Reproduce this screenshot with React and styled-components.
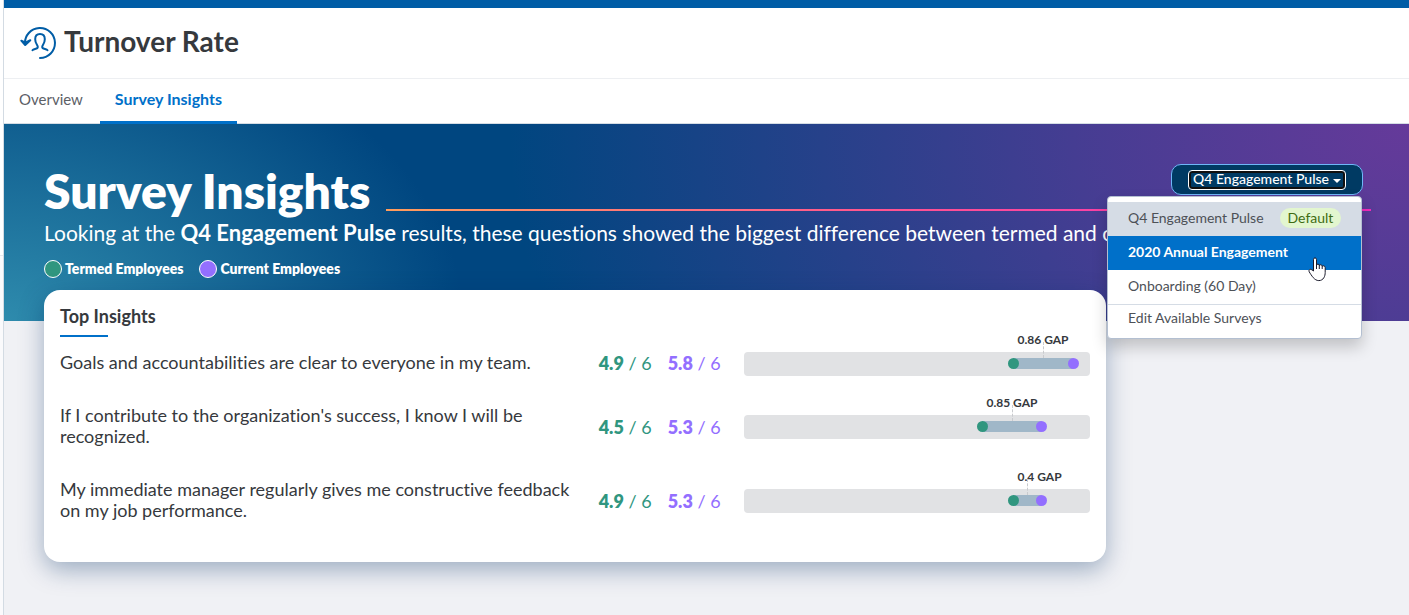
import React, { useState } from "react";

import styled, { createGlobalStyle } from "styled-components";

const insights = [
  {
    question: "Goals and accountabilities are clear to everyone in my team.",
    termed: 4.9,
    current: 5.76,
    gap: "0.86",
  },
  {
    question:
      "If I contribute to the organization's success, I know I will be recognized.",
    termed: 4.451,
    current: 5.301,
    gap: "0.85",
  },
  {
    question:
      "My immediate manager regularly gives me constructive feedback on my job performance.",
    termed: 4.9,
    current: 5.3,
    gap: "0.4",
  },
];

const surveys = [
  { name: "Q4 Engagement Pulse", selected: true },
  { name: "2020 Annual Engagement", active: true },
  { name: "Onboarding (60 Day)" },
];

// Scores run from 1 to 6
const toPercent = (score) => ((score - 1) / 5) * 100;

function TurnoverIcon() {
  return (
    <svg width="36" height="36" viewBox="0 0 36 36" fill="none" aria-hidden="true">
      <g
        stroke="#005da6"
        strokeWidth="2"
        strokeLinecap="round"
        strokeLinejoin="round"
      >
        <path d="M5 19A15 15 0 1 1 20 33" />
        <path d="M1.3 15.7L5.2 20L10.3 15.2L5.4 17.6Z" fill="#005da6" />
        <path d="M12.5 25.2C13.6 23.6 17.8 24.4 17.8 21.9C17.8 20 15.2 19 15.2 14.2C15.2 11 17 9 20 9C23 9 24.8 11 24.8 14.2C24.8 19 22.2 20 22.2 21.9C22.2 24.4 26.4 23.6 27.5 25.2" />
      </g>
    </svg>
  );
}

function Pointer() {
  return (
    <PointerIcon viewBox="0 0 18 25" aria-hidden="true">
      <path
        d="M5.5 14V2.3C5.5 .4 8.5 .4 8.5 2.3V8C8.8 6.7 11.3 6.9 11.3 8.4C11.7 7.3 14.2 7.6 14.2 9.2C14.8 8.3 17.2 8.8 17.2 10.6V15.5C17.2 19 15.6 23.6 10.8 23.6C6.4 23.6 3.6 18.6 1.2 14.8C.2 12.9 2.4 11.6 3.8 12.8Z"
        fill="#fff"
        stroke="#1a1a2b"
        strokeLinejoin="round"
      />
      <path d="M8.5 7V12M11.3 8V12M14.2 9V12" stroke="#1a1a2b" />
    </PointerIcon>
  );
}

function SurveyPicker() {
  const [open, setOpen] = useState(true);

  return (
    <Picker>
      <PickerButton
        type="button"
        aria-haspopup="menu"
        aria-expanded={open}
        onClick={() => setOpen(!open)}
      >
        Q4 Engagement Pulse
        <Caret />
      </PickerButton>
      {open && (
        <Menu role="menu">
          {surveys.map((survey) => (
            <MenuItem
              key={survey.name}
              type="button"
              role="menuitem"
              $selected={survey.selected}
              $active={survey.active}
            >
              {survey.name}
              {survey.selected && <Badge>Default</Badge>}
              {survey.active && <Pointer />}
            </MenuItem>
          ))}
          <EditItem type="button" role="menuitem">
            Edit Available Surveys
          </EditItem>
        </Menu>
      )}
    </Picker>
  );
}

function GapChart({ termed, current, gap }) {
  const start = toPercent(termed);
  const end = toPercent(current);

  return (
    <Track>
      <Range style={{ left: `${start}%`, width: `${end - start}%` }}>
        <GapLabel>{gap} GAP</GapLabel>
        <GapLine />
        <Dot $color="#30967f" $at="0%" />
        <Dot $color="#936fff" $at="100%" />
      </Range>
    </Track>
  );
}

function App() {
  return (
    <Shell>
      <GlobalStyle />
      <Rail />
      <Page>
        <Header>
          <TurnoverIcon />
          <PageTitle>Turnover Rate</PageTitle>
        </Header>
        <Tabs>
          <Tab href="#overview">Overview</Tab>
          <Tab href="#survey-insights" $active aria-current="page">
            Survey Insights
          </Tab>
        </Tabs>
        <Hero>
          <HeroTop>
            <HeroTitle>Survey Insights</HeroTitle>
            <HeroSide>
              <SurveyPicker />
              <Rule />
            </HeroSide>
          </HeroTop>
          <Intro>
            Looking at the <strong>Q4 Engagement Pulse</strong> results, these
            questions showed the biggest difference between termed and current
            employees.
          </Intro>
          <Legend>
            <LegendItem $color="#30967f">Termed Employees</LegendItem>
            <LegendItem $color="#936fff">Current Employees</LegendItem>
          </Legend>
        </Hero>
        <Card>
          <CardTitle>Top Insights</CardTitle>
          <InsightTable>
            <colgroup>
              <col />
              <ScoreCol />
              <ScoreCol $wide />
              <ChartCol />
            </colgroup>
            <tbody>
              {insights.map((item) => (
                <tr key={item.question}>
                  <Question scope="row">{item.question}</Question>
                  <Score $color="#30967f">
                    <b>{item.termed.toFixed(1)}</b> / 6
                  </Score>
                  <Score $color="#936fff">
                    <b>{item.current.toFixed(1)}</b> / 6
                  </Score>
                  <Cell>
                    <GapChart {...item} />
                  </Cell>
                </tr>
              ))}
            </tbody>
          </InsightTable>
        </Card>
      </Page>
    </Shell>
  );
}

export default App;

const GlobalStyle = createGlobalStyle`
  * {
    box-sizing: border-box;
  }

  body {
    margin: 0;
    background: #f0f1f5;
    color: #36393d;
    font-family: Lato, "Open Sans", sans-serif;
    font-variant-ligatures: none;
  }

  button {
    font-family: inherit;
    font-variant-ligatures: none;
  }
`;

const Shell = styled.div`
  display: flex;
  min-height: 100vh;
`;

const Rail = styled.div`
  width: 4px;
  flex: none;
  background: linear-gradient(#fff 255px, #e6e9ee 255px, #e6e9ee 256px, #fafafc 256px);
  border-right: 1px solid #d3dbe3;
`;

const Page = styled.div`
  flex: 1;
  min-width: 0;
  border-top: 8px solid #005da6;
`;

const Header = styled.header`
  display: flex;
  align-items: center;
  gap: 8px;
  height: 71px;
  padding: 0 16px;
  background: #fff;
  border-bottom: 1px solid #edeff2;
`;

const PageTitle = styled.h1`
  margin: 0;
  padding-bottom: 4px;
  font-size: 28px;
  font-weight: 700;
  line-height: 36px;
`;

const Tabs = styled.nav`
  display: flex;
  gap: 2px;
  height: 45px;
  background: #fff;
  box-shadow: inset 0 -1px #d5dde5;
`;

const Tab = styled.a`
  padding: 9px 15px 0;
  font-size: ${(props) => (props.$active ? "16px" : "15px")};
  font-weight: ${(props) => (props.$active ? 700 : 400)};
  line-height: 22px;
  color: ${(props) => (props.$active ? "#0070c9" : "#5c6066")};
  border-bottom: 3px solid ${(props) => (props.$active ? "#0070c9" : "transparent")};
  text-decoration: none;
`;

const Hero = styled.section`
  padding: 39px 38px 42px 40px;
  color: #fff;
  background:
    radial-gradient(ellipse 460px 310px at 0 100%, #2e8bad, rgba(0, 70, 128, 0) 100%),
    radial-gradient(ellipse 900px 700px at 100% 0, #653a9a, rgba(84, 59, 150, 0.85) 35%, rgba(0, 70, 128, 0) 100%),
    #004680;
`;

const HeroTop = styled.div`
  display: flex;
  gap: 16px;
`;

const HeroTitle = styled.h2`
  margin: 0;
  font-size: 48px;
  font-weight: 800;
  line-height: 56px;
`;

const HeroSide = styled.div`
  display: flex;
  flex: 1;
  flex-direction: column;
  justify-content: space-between;
  padding: 1px 0 8px;
`;

const Rule = styled.div`
  height: 2px;
  background: linear-gradient(to right, #ff9d5c, #ff5490 50%, #f32bbd);
`;

const Picker = styled.div`
  position: relative;
  display: flex;
  align-items: center;
  align-self: flex-end;
  height: 31px;
  margin-right: 8px;
  padding: 0 17px;
  background: #003a63;
  border: 1px solid #6fb6f8;
  border-radius: 10px;
`;

const PickerButton = styled.button`
  display: flex;
  align-items: center;
  gap: 4px;
  height: 18px;
  padding: 0 2px 2px;
  font-size: 14px;
  font-weight: 500;
  line-height: 14px;
  color: #fff;
  background: none;
  border: 2px solid #101010;
  border-radius: 3px;
  outline: 1px solid #fff;
  cursor: pointer;
`;

const Caret = styled.span`
  margin-top: 4px;
  border: 4px solid transparent;
  border-top-color: #fff;
  border-bottom: 0;
`;

const Menu = styled.div`
  position: absolute;
  z-index: 2;
  top: 31px;
  right: 0;
  width: 255px;
  padding: 5px 0;
  background: #fff;
  border: 1px solid #b3bfd1;
  border-radius: 4px;
  box-shadow: 0 8px 16px rgba(0, 0, 0, 0.2);
`;

const MenuItem = styled.button`
  position: relative;
  display: flex;
  align-items: center;
  gap: 16px;
  width: 100%;
  height: 34px;
  padding: 0 20px 2px;
  font-size: 14px;
  font-weight: ${(props) => (props.$active ? 700 : 400)};
  line-height: 20px;
  white-space: nowrap;
  color: ${(props) => (props.$active ? "#fff" : "#4d5157")};
  background: ${(props) =>
    props.$active ? "#0070c9" : props.$selected ? "#d5dce5" : "#fff"};
  border: 0;
  cursor: pointer;
`;

const EditItem = styled(MenuItem)`
  height: 29px;
  border-top: 1px solid #d5dce5;
`;

const Badge = styled.span`
  padding: 0 8px;
  color: #3f6b12;
  background: #e3f6cf;
  border-radius: 10px;
`;

const PointerIcon = styled.svg`
  position: absolute;
  top: 21px;
  right: 35px;
  width: 18px;
  height: 25px;
  z-index: 1;
  fill: none;
`;

const Intro = styled.p`
  margin: 0;
  font-size: 21px;
  line-height: 28px;

  strong {
    font-size: 22px;
    font-weight: 700;
    line-height: 26px;
  }
`;

const Legend = styled.div`
  display: flex;
  gap: 16px;
  margin-top: 12px;
`;

const LegendItem = styled.span`
  display: flex;
  align-items: center;
  gap: 3px;
  font-size: 14px;
  font-weight: 800;
  line-height: 20px;

  &::before {
    content: "";
    width: 16px;
    height: 16px;
    background: ${(props) => props.$color};
    border: 1px solid #fff;
    border-radius: 50%;
  }
`;

const Card = styled.section`
  position: relative;
  width: calc((100% - 78px) * 0.8);
  margin: -31px 0 53px 40px;
  padding: 16px 16px 24px;
  background: #fff;
  border-radius: 16px;
  box-shadow: 0 8px 24px rgba(0, 45, 98, 0.35);
`;

const CardTitle = styled.h3`
  margin: 0;
  font-size: 18px;
  font-weight: 700;
  line-height: 21px;

  &::after {
    content: "";
    display: block;
    width: 48px;
    height: 2px;
    margin-top: 8px;
    background: #0070c9;
  }
`;

const InsightTable = styled.table`
  width: 100%;
  table-layout: fixed;
  border-collapse: collapse;
`;

const ScoreCol = styled.col`
  width: ${(props) => (props.$wide ? "76px" : "69px")};
`;

const ChartCol = styled.col`
  width: 33.6%;
`;

const Cell = styled.td`
  padding: 0;
  vertical-align: middle;
`;

const Question = styled.th`
  padding: 15px 16px 17px 0;
  font-size: 18px;
  font-weight: 400;
  line-height: 21px;
  text-align: left;
`;

const Score = styled(Cell)`
  font-size: 18px;
  line-height: 21px;
  white-space: nowrap;
  color: ${(props) => props.$color};

  b {
    font-weight: 800;
  }
`;

const Track = styled.div`
  position: relative;
  height: 24px;
  background: #e1e2e4;
  border-radius: 4px;
`;

const Range = styled.div`
  position: absolute;
  top: 6px;
  height: 11px;
  background: #a0b7c8;
`;

const Dot = styled.span`
  position: absolute;
  top: 0;
  left: ${(props) => props.$at};
  width: 11px;
  height: 11px;
  margin-left: -5px;
  background: ${(props) => props.$color};
  border-radius: 50%;
`;

const GapLabel = styled.span`
  position: absolute;
  bottom: 21px;
  left: 4px;
  font-size: 12px;
  font-weight: 700;
  line-height: 16px;
  white-space: nowrap;
`;

const GapLine = styled.span`
  position: absolute;
  bottom: 11px;
  left: 50%;
  height: 16px;
  border-left: 1px dashed #c9cbce;
`;
